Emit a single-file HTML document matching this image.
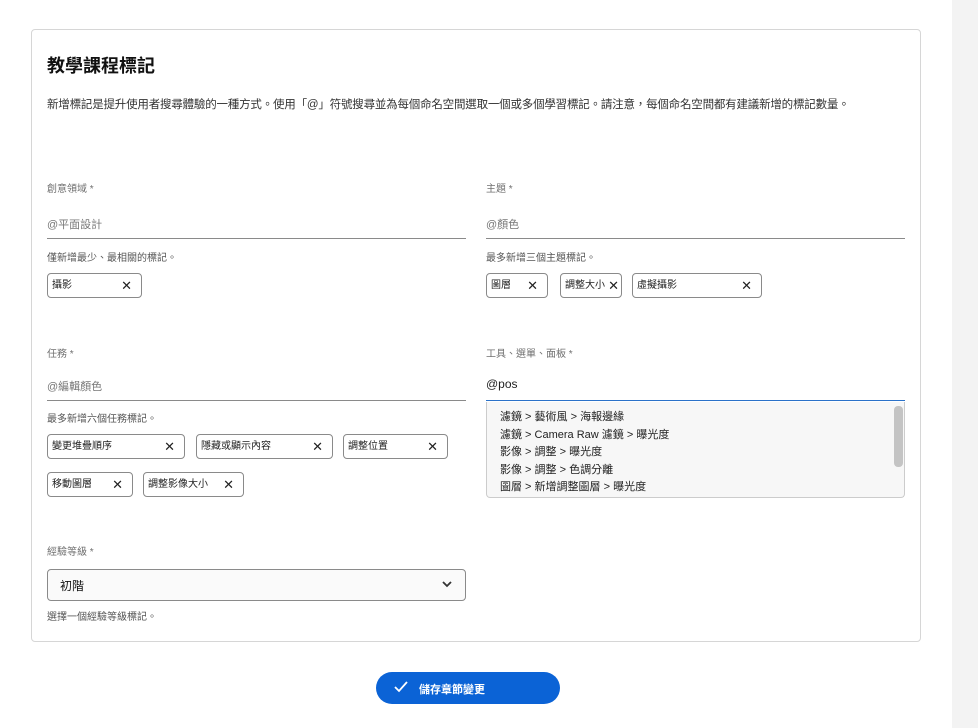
<!DOCTYPE html>
<html><head><meta charset="utf-8"><style>
body{margin:0;width:978px;height:728px;background:#fff;position:relative;overflow:hidden;font-family:"Liberation Sans","Noto Sans CJK TC",sans-serif;color:#222}
.a{position:absolute;white-space:nowrap}
.strip{position:absolute;left:952px;top:0;width:26px;height:728px;background:#f3f3f3}
.card{position:absolute;left:31px;top:29px;width:888px;height:611px;border:1px solid #d6d6d6;border-radius:4px}
.lbl{font-size:10px;color:#707070}
.ph{font-size:11px;color:#777}
.hint{font-size:10px;color:#555}
.line{position:absolute;height:1px;background:#8a8a8a}
.tag{position:absolute;height:25px;border:1px solid #8a8a8a;border-radius:4px;box-sizing:border-box;font-size:10px;color:#222;line-height:24px;padding-left:4px}
.tag b{position:absolute;right:9px;top:0;font-weight:normal;font-size:13px}
</style></head><body>
<div class="strip"></div>
<div class="card"></div>
<div class="a" style="left:47px;top:52px;font-size:18px;font-weight:bold;color:#111">教學課程標記</div>
<div class="a" style="left:47px;top:96px;font-size:11.5px;letter-spacing:-0.2px;color:#333">新增標記是提升使用者搜尋體驗的一種方式。使用「@」符號搜尋並為每個命名空間選取一個或多個學習標記。請注意，每個命名空間都有建議新增的標記數量。</div>

<div class="a lbl" style="left:47px;top:180px">創意領域 *</div>
<div class="a ph" style="left:47px;top:216px">@平面設計</div>
<div class="line" style="left:47px;top:238px;width:419px"></div>
<div class="a hint" style="left:47px;top:249px">僅新增最少、最相關的標記。</div>
<div class="tag" style="left:47px;top:273px;width:95px">攝影<b>✕</b></div>

<div class="a lbl" style="left:486px;top:180px">主題 *</div>
<div class="a ph" style="left:486px;top:216px">@顏色</div>
<div class="line" style="left:486px;top:238px;width:419px"></div>
<div class="a hint" style="left:486px;top:249px">最多新增三個主題標記。</div>
<div class="tag" style="left:486px;top:273px;width:62px">圖層<b>✕</b></div>
<div class="tag" style="left:560px;top:273px;width:62px">調整大小<b style="right:2px">✕</b></div>
<div class="tag" style="left:632px;top:273px;width:130px">虛擬攝影<b>✕</b></div>

<div class="a lbl" style="left:47px;top:345px">任務 *</div>
<div class="a ph" style="left:47px;top:378px">@編輯顏色</div>
<div class="line" style="left:47px;top:400px;width:419px"></div>
<div class="a hint" style="left:47px;top:410px">最多新增六個任務標記。</div>
<div class="tag" style="left:47px;top:434px;width:138px">變更堆疊順序<b>✕</b></div>
<div class="tag" style="left:196px;top:434px;width:137px">隱藏或顯示內容<b>✕</b></div>
<div class="tag" style="left:343px;top:434px;width:105px">調整位置<b>✕</b></div>
<div class="tag" style="left:47px;top:472px;width:86px">移動圖層<b>✕</b></div>
<div class="tag" style="left:143px;top:472px;width:101px">調整影像大小<b>✕</b></div>

<div class="a lbl" style="left:486px;top:345px">工具、選單、面板 *</div>
<div class="a" style="left:486px;top:377px;font-size:12px;color:#222">@pos</div>
<div class="line" style="left:486px;top:400px;width:419px;background:#2b72c9"></div>
<div style="position:absolute;left:486px;top:402px;width:419px;height:96px;border:1px solid #ccc;border-top:none;border-radius:0 0 4px 4px;box-sizing:border-box;background:#f7f7f7;overflow:hidden;font-size:11px;line-height:17.5px;color:#222">
<div style="position:absolute;left:13px;top:7px;white-space:nowrap">濾鏡 &gt; 藝術風 &gt; 海報邊緣<br>濾鏡 &gt; Camera Raw 濾鏡 &gt; 曝光度<br>影像 &gt; 調整 &gt; 曝光度<br>影像 &gt; 調整 &gt; 色調分離<br>圖層 &gt; 新增調整圖層 &gt; 曝光度</div>
<div style="position:absolute;left:407px;top:4px;width:9px;height:61px;background:#c4c4c4;border-radius:4px"></div>
</div>

<div class="a lbl" style="left:47px;top:543px">經驗等級 *</div>
<div style="position:absolute;left:47px;top:569px;width:419px;height:32px;border:1px solid #8a8a8a;border-radius:4px;box-sizing:border-box;background:#fafafa"></div>
<div class="a" style="left:60px;top:577px;font-size:12px;color:#111">初階</div>
<svg class="a" style="left:441px;top:579px" width="12" height="10" viewBox="0 0 12 10"><path d="M2 3l4 4 4-4" fill="none" stroke="#333" stroke-width="1.8"/></svg>
<div class="a hint" style="left:47px;top:608px">選擇一個經驗等級標記。</div>

<div style="position:absolute;left:376px;top:672px;width:184px;height:32px;border-radius:16px;background:#0b63d6"></div>
<svg class="a" style="left:393px;top:680px" width="16" height="14" viewBox="0 0 16 14"><path d="M2 7l4 4 8-9" fill="none" stroke="#fff" stroke-width="1.8"/></svg>
<div class="a" style="left:419px;top:681px;font-size:11px;color:#fff;font-weight:bold">儲存章節變更</div>
</body></html>
